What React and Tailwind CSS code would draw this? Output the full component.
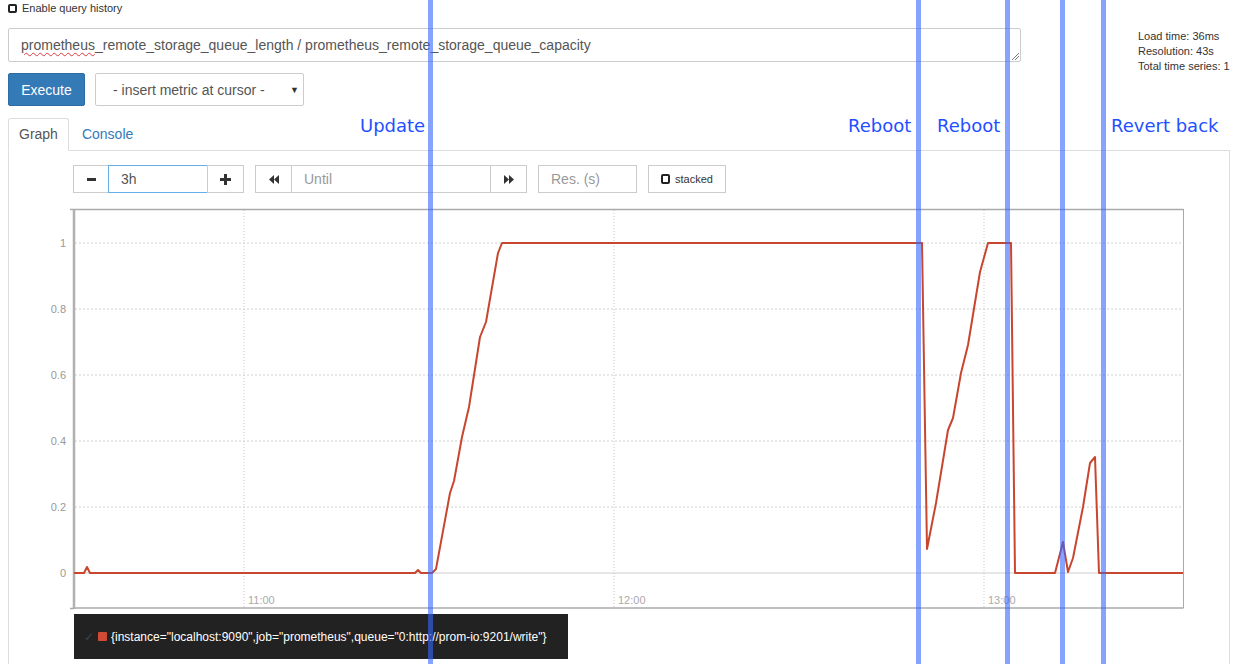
import React from "react";

// series points, page coords (x px, y px)
const series = [
  [74, 573], [84, 573], [87, 567], [90, 573], [415, 573], [418, 570], [421, 573],
  [432, 573], [436, 569], [450, 493], [454, 481], [462, 437], [469, 407], [480, 337],
  [486, 322], [498, 253], [502, 243], [922, 243], [927, 549], [936, 503], [948, 430],
  [953, 418], [961, 373], [968, 345], [980, 272], [988, 243], [1011, 243], [1015, 573],
  [1055, 573], [1063, 542], [1068, 572], [1073, 558], [1083, 507], [1090, 463],
  [1095, 457], [1099, 573], [1183, 573],
];

const yTicks = [
  { y: 243, label: "1" },
  { y: 309, label: "0.8" },
  { y: 375, label: "0.6" },
  { y: 441, label: "0.4" },
  { y: 507, label: "0.2" },
];

const xTicks = [
  { x: 244, label: "11:00" },
  { x: 614, label: "12:00" },
  { x: 984, label: "13:00" },
];

const markers = [428, 916, 1005, 1060, 1101];

const notes = [
  { x: 360, text: "Update" },
  { x: 848, text: "Reboot" },
  { x: 937, text: "Reboot" },
  { x: 1111, text: "Revert back" },
];

const Chart = () => {
  const d = series.map((p, i) => `${i === 0 ? "M" : "L"}${p[0]},${p[1]}`).join(" ");
  return (
    <svg width="1180" height="405" viewBox="9 205 1180 405" className="block">
      {/* grid */}
      {yTicks.map((t) => (
        <g key={t.label}>
          <line x1="75" x2="1183" y1={t.y} y2={t.y} stroke="#d0d0d0" strokeWidth="1" strokeDasharray="2 2" />
          <text x="66" y={t.y + 4} textAnchor="end" fontSize="11" fill="#999" fontFamily="Liberation Sans, Arial, sans-serif">
            {t.label}
          </text>
        </g>
      ))}
      <line x1="75" x2="1183" y1="573" y2="573" stroke="#e6e6e6" strokeWidth="2" />
      <text x="66" y="577" textAnchor="end" fontSize="11" fill="#999" fontFamily="Liberation Sans, Arial, sans-serif">0</text>
      {xTicks.map((t) => (
        <g key={t.label}>
          <line x1={t.x} x2={t.x} y1="210" y2="607" stroke="#c8c8c8" strokeWidth="1" strokeDasharray="1 2" />
          <text x={t.x + 4} y="604" fontSize="11" fill="#aaa" fontFamily="Liberation Sans, Arial, sans-serif">
            {t.label}
          </text>
        </g>
      ))}
      {/* frame */}
      <line x1="74" x2="1183.5" y1="209.5" y2="209.5" stroke="#aaa" strokeWidth="1.5" />
      <line x1="1183.5" x2="1183.5" y1="209" y2="608" stroke="#aaa" strokeWidth="1" />
      <line x1="74" x2="1183.5" y1="608" y2="608" stroke="#aaa" strokeWidth="1.5" />
      <line x1="74" x2="74" y1="209" y2="609" stroke="#b0b0b0" strokeWidth="2.5" />
      <line x1="70" x2="74" y1="209.5" y2="209.5" stroke="#aaa" strokeWidth="1.5" />
      <line x1="70" x2="74" y1="608.5" y2="608.5" stroke="#aaa" strokeWidth="1.5" />
      {/* series */}
      <path d={d} fill="none" stroke="#c8462f" strokeWidth="2" strokeLinejoin="round" />
    </svg>
  );
};

const Box = ({ className = "", children }) => (
  <div className={`h-[28px] border border-[#ccc] flex items-center ${className}`}>{children}</div>
);

export default function App() {
  return (
    <div className="relative w-[1238px] h-[664px] overflow-hidden bg-white text-[#333] font-['Liberation_Sans',Arial,sans-serif]">
      {/* query history */}
      <div className="h-[16px] flex items-center pl-[8px] text-[11px]">
        <span className="w-[9px] h-[9px] rounded-[2px] border-2 border-[#222]" />
        <span className="ml-[5px]">Enable query history</span>
      </div>

      {/* expression + stats */}
      <div className="flex items-start mt-[12px]">
        <div className="pl-[8px]">
          <div className="relative w-[1013px] h-[34px] border border-[#ccc] rounded-[2px] pl-[12px] pt-[7px] text-[14px] text-[#555] leading-[18px]">
            <span className="underline decoration-wavy decoration-[#e0393e] decoration-1 underline-offset-2">prometheus</span>
            _remote_storage_queue_length / prometheus_remote_storage_queue_capacity
            <svg className="absolute right-[1px] bottom-[1px]" width="8" height="8" viewBox="0 0 8 8">
              <line x1="1" y1="8" x2="8" y2="1" stroke="#777" strokeWidth="1" />
              <line x1="4" y1="8" x2="8" y2="4" stroke="#777" strokeWidth="1" />
            </svg>
          </div>
          <div className="flex mt-[11px] gap-[10px]">
            <button className="w-[77px] h-[33px] pt-[1px] bg-[#337ab7] border border-[#2e6da4] rounded-[2px] text-white text-[14px]">
              Execute
            </button>
            <div className="relative w-[209px] h-[33px] pt-[1px] border border-[#ccc] rounded-[2px] flex items-center pl-[17px] text-[14px] text-[#555]">
              - insert metric at cursor -
              <span className="absolute right-[4px] top-[10px] text-[9px] text-[#333]">▼</span>
            </div>
          </div>
        </div>
        <div className="ml-[117px] text-[11px] leading-[15px] pt-[1px] text-[#333]">
          <div>Load time: 36ms</div>
          <div>Resolution: 43s</div>
          <div>Total time series: 1</div>
        </div>
      </div>

      {/* tabs */}
      <div className="mt-[12px] ml-[8px] w-[1222px] flex border-b border-[#ddd] h-[33px] text-[14px]">
        <div className="-mb-px h-[33px] px-[10px] flex items-center bg-white border border-[#ddd] border-b-white rounded-t-[3px] text-[#555]">
          Graph
        </div>
        <div className="ml-[2px] px-[11px] flex items-center text-[#337ab7]">Console</div>
      </div>

      {/* panel */}
      <div className="ml-[8px] w-[1222px] h-[520px] border-l border-r border-[#ddd] pt-[14px]">
        <div className="flex items-center pl-[64px] text-[14px] text-[#555]">
          <Box className="w-[36px] justify-center">
            <svg width="9" height="3" viewBox="0 0 9 3"><rect width="9" height="3" fill="#333" /></svg>
          </Box>
          <div className="h-[28px] w-[100px] -ml-px border border-[#66afe9] flex items-center pl-[12px] text-[#555]">3h</div>
          <Box className="w-[37px] -ml-px justify-center">
            <svg width="11" height="11" viewBox="0 0 11 11">
              <rect x="0" y="4" width="11" height="3" fill="#333" />
              <rect x="4" y="0" width="3" height="11" fill="#333" />
            </svg>
          </Box>

          <Box className="ml-[11px] w-[37px] justify-center">
            <svg width="10" height="9" viewBox="0 0 10 9">
              <polygon points="5,0 5,9 0,4.5" fill="#333" />
              <polygon points="10,0 10,9 5,4.5" fill="#333" />
            </svg>
          </Box>
          <Box className="w-[200px] -ml-px pl-[12px] text-[#999]">Until</Box>
          <Box className="w-[37px] -ml-px justify-center">
            <svg width="10" height="9" viewBox="0 0 10 9">
              <polygon points="0,0 0,9 5,4.5" fill="#333" />
              <polygon points="5,0 5,9 10,4.5" fill="#333" />
            </svg>
          </Box>

          <Box className="ml-[11px] w-[99px] pl-[12px] text-[#999]">Res. (s)</Box>

          <Box className="ml-[11px] w-[78px] pl-[12px] text-[11px] text-[#333]">
            <span className="w-[9px] h-[10px] rounded-[2px] border-2 border-[#222]" />
            <span className="ml-[5px]">stacked</span>
          </Box>
        </div>

        <div className="mt-[12px]">
          <Chart />
        </div>

        <div className="mt-[4px] ml-[65px] w-[494px] h-[45px] bg-[#222] flex items-center pl-[10px] text-[12px]">
          <span className="text-[#3a4350] text-[12px]">✓</span>
          <span className="ml-[4px] w-[9px] h-[9px] rounded-[1px] bg-[#d04b36]" />
          <span className="ml-[4px] text-white">
            {'{instance="localhost:9090",job="prometheus",queue="0:http://prom-io:9201/write"}'}
          </span>
        </div>
      </div>

      {/* annotation overlay */}
      {markers.map((x) => (
        <div key={x} className="absolute top-0 h-[664px] w-[5px] bg-[#3366ff]/60" style={{ left: x }} />
      ))}
      {notes.map((n, i) => (
        <div
          key={i}
          className="absolute top-[115px] text-[18px] leading-[22px] text-[#1f4fff] font-['DejaVu_Sans',sans-serif] whitespace-nowrap"
          style={{ left: n.x }}
        >
          {n.text}
        </div>
      ))}
    </div>
  );
}
